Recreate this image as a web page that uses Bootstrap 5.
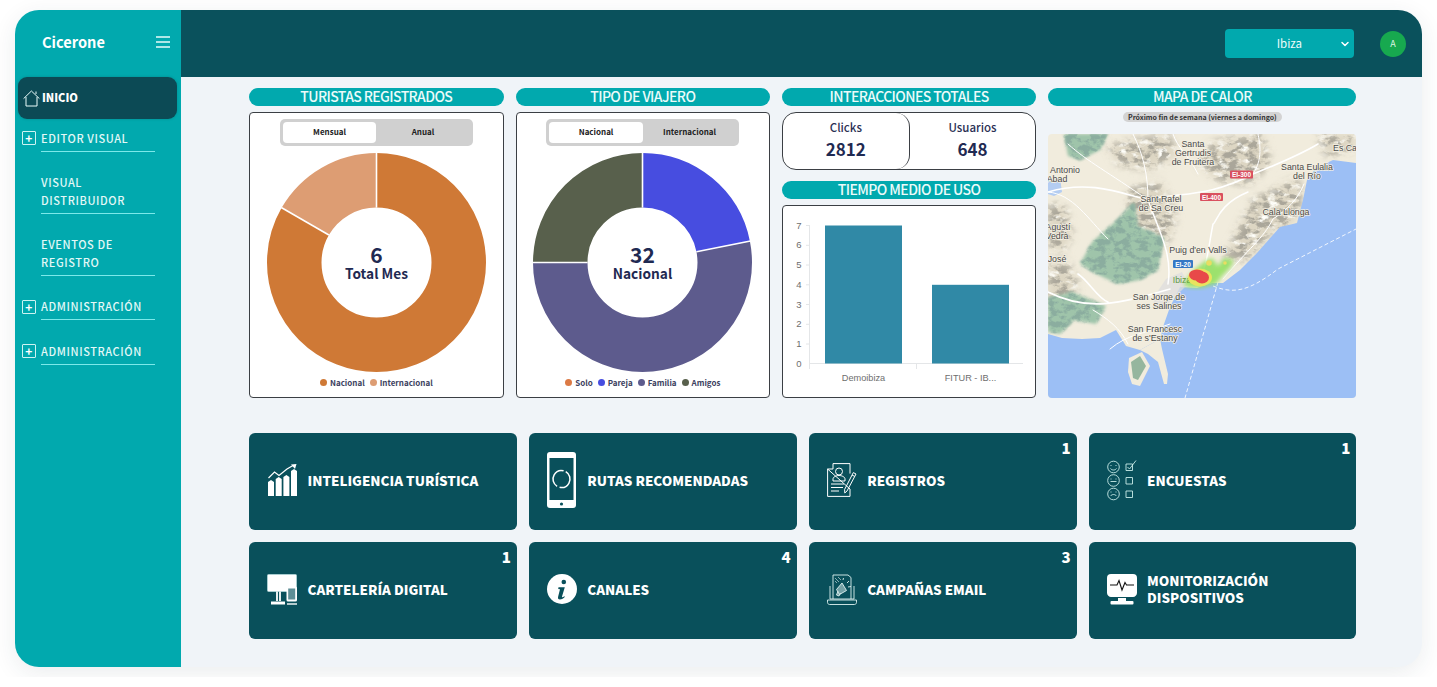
<!DOCTYPE html>
<html lang="es">
<head>
<meta charset="UTF-8">
<title>Cicerone</title>
<link rel="stylesheet" href="https://cdn.jsdelivr.net/npm/bootstrap@5.3.0/dist/css/bootstrap.min.css">
<style>
body { background:#fff; font-family:"Noto Sans CJK SC","Noto Sans",sans-serif; overflow:hidden; }
.app-frame { margin:10px 15px; width:1407px; height:657px; border-radius:24px; overflow:hidden; background:#f0f4f8; box-shadow:0 6px 24px rgba(30,50,70,.09); }
.side-bar { width:166px; background:#01a9ae; color:#fff; }
.side-brand { height:67px; padding:0 11px 4px 27px; font-size:14.6px; font-weight:700; }
.side-active { margin:0 4px 10px 3px; height:42px; background:#0c4a55; border-radius:9px; padding-left:5px; font-size:11px; font-weight:900; gap:2px; box-shadow:0 0 3px rgba(0,0,0,.18); }
.side-active span { margin-top:-2px; }
.side-item { padding-left:7px; margin-bottom:22px; font-size:11px; line-height:17.5px; letter-spacing:.6px; color:#e3f8f7; font-weight:500; }
.side-plus { flex:none; width:14px; height:14px; margin:2px 5px 0 0; border:1px solid #cdf3f2; border-radius:1px; display:flex; align-items:center; justify-content:center; font-size:12px; line-height:1; font-weight:700; color:#fff; }
.side-gap { flex:none; width:19px; }
.side-text { width:114px; border-bottom:1px solid #7ce9ea; padding:.5px 0 3.5px; }
.top-bar { height:67px; background:#0a515c; padding-right:17px; }
.zone-select { width:129px; height:29px; padding:0 20px; border:0; border-radius:4px; background-color:#01a9ae; color:#eefcfb; font-size:11.5px; text-align:center; background-size:10px 8px; background-position:right 4px center; background-image:url("data:image/svg+xml,%3csvg xmlns='http://www.w3.org/2000/svg' viewBox='0 0 16 16'%3e%3cpath fill='none' stroke='%23fff' stroke-linecap='round' stroke-linejoin='round' stroke-width='3' d='m2 5 6 6 6-6'/%3e%3c/svg%3e"); }
.user-dot { width:26px; height:26px; margin-left:26px; border-radius:50%; background:#17a94f; color:#dff5e6; font-size:9px; }
.main-area { padding:11px 66.5px 0 68px; }
.stat-grid { display:grid; grid-template-columns:254.6px 254.4px 254.4px 1fr; gap:12px; height:310px; }
.head-pill { height:18px; margin-bottom:6px; border-radius:9px; background:#01a9ae; color:#ecfbfa; font-size:14px; font-weight:500; letter-spacing:-.6px; line-height:17px; text-align:center; flex:none; }
.box-line { background:#fff; border:1px solid #3b3f44; border-radius:4px; }
.switch-wrap { width:193px; height:27px; margin-top:6px; padding:3px; background:#d0d0d0; border-radius:5px; font-size:8px; font-weight:700; color:#222; flex:none; }
.switch-wrap > div { flex:1; display:flex; align-items:center; justify-content:center; border-radius:4px; padding-bottom:1px; }
.switch-wrap > div.is-on { background:#fff; }
.donut-wrap { margin-top:6.500px; display:block; flex:none; }
.donut-mid { fill:#1f2a52; font-weight:700; text-anchor:middle; font-family:"Noto Sans CJK SC","Noto Sans",sans-serif; }
.legend-row { font-size:8px; font-weight:700; color:#3c4160; gap:5px; margin-top:5px; line-height:12px; }
.legend-row i { display:inline-block; width:7px; height:7px; border-radius:50%; margin-right:3px; }
.count-box { height:58px; border-radius:14px; flex:none; }
.count-cell { flex:1; height:100%; text-align:center; padding-top:6px; color:#2b3054; }
.count-left { border:0 solid #3b3f44; border-right-width:1px; border-radius:14px; }
.count-cell span { display:block; font-size:11.5px; font-weight:500; line-height:16px; }
.count-cell b { display:block; font-size:17px; line-height:24px; margin-top:2px; color:#1f2a52; }
.pill-gap { margin-top:11px; }
.near-tag { width:159px; height:10px; margin:0 auto 12px; background:#d3d3d3; border-radius:5px; font-size:7px; line-height:10px; font-weight:700; text-align:center; color:#333; flex:none; }
.map-box { border-radius:4px; overflow:hidden; height:264px; display:block; }
.map-box text { font-family:"Liberation Sans",Arial,sans-serif; font-size:8.800px; fill:#4a4a48; text-anchor:middle; paint-order:stroke; stroke:#f4f0e4; stroke-width:1.4px; }
.map-box text.shield { font-size:6.500px; fill:#fff; stroke:none; font-weight:700; }
.tile-grid { display:grid; grid-template-columns:repeat(4,1fr); gap:12px; margin-top:35px; }
.tile-card { position:relative; height:97px; background:#09505b; border-radius:6px; color:#fff; padding:0 0 3px 18px; gap:10.500px; font-size:13.4px; line-height:17px; font-weight:900; }
.tile-icon { width:30px; flex:none; display:flex; justify-content:center; }
.tile-num { position:absolute; top:5px; right:6px; font-size:15px; line-height:20px; font-weight:900; }
</style>
</head>
<body>
<div class="app-frame d-flex">

  <aside class="side-bar flex-shrink-0">
    <div class="side-brand d-flex align-items-center justify-content-between">
      <span>Cicerone</span>
      <svg width="14" height="12" viewBox="0 0 14 12" stroke="#e6fbfa" stroke-width="1.3"><path d="M0 1h14M0 6h14M0 11h14"/></svg>
    </div>
    <div class="side-active d-flex align-items-center">
      <svg width="17" height="17" viewBox="0 0 17 17" fill="none" stroke="#e9fbfa" stroke-width="1"><path d="M.6 8.6 8.400 1l8 7.600M3 7v9h11V7M13 4V1.500"/></svg>
      <span>INICIO</span>
    </div>
    <div class="side-item d-flex"><span class="side-plus">+</span><div class="side-text">EDITOR VISUAL</div></div>
    <div class="side-item d-flex"><span class="side-gap"></span><div class="side-text">VISUAL DISTRIBUIDOR</div></div>
    <div class="side-item d-flex"><span class="side-gap"></span><div class="side-text">EVENTOS DE REGISTRO</div></div>
    <div class="side-item d-flex"><span class="side-plus">+</span><div class="side-text">ADMINISTRACIÓN</div></div>
    <div class="side-item d-flex"><span class="side-plus">+</span><div class="side-text">ADMINISTRACIÓN</div></div>
  </aside>

  <div class="flex-grow-1">
    <header class="top-bar d-flex align-items-center justify-content-end">
      <select class="form-select zone-select"><option>Ibiza</option></select>
      <div class="user-dot d-flex align-items-center justify-content-center">A</div>
    </header>

    <main class="main-area">
      <section class="stat-grid">

        <div class="d-flex flex-column">
          <div class="head-pill">TURISTAS REGISTRADOS</div>
          <div class="box-line flex-grow-1 d-flex flex-column align-items-center">
            <div class="switch-wrap d-flex"><div class="is-on">Mensual</div><div>Anual</div></div>
            <svg class="donut-wrap" width="219" height="219" viewBox="-109.500 -109.500 219 219">
              <g fill="none" stroke-width="54.5" transform="rotate(-90)">
                <circle r="82.25" stroke="#cf7936" pathLength="6" stroke-dasharray="5 1"/>
                <circle r="82.25" stroke="#dd9d73" pathLength="6" stroke-dasharray="1 5" stroke-dashoffset="-5"/>
              </g>
              <g stroke="#fff" stroke-width="1.6"><path d="M0-55V-110"/><path d="M0-55V-110" transform="rotate(-60)"/></g>
              <text class="donut-mid" y="0" font-size="21">6</text>
              <text class="donut-mid" y="16.500" font-size="13.700">Total Mes</text>
            </svg>
            <div class="legend-row d-flex"><span><i style="background:#cf7936"></i>Nacional</span><span><i style="background:#dd9d73"></i>Internacional</span></div>
          </div>
        </div>

        <div class="d-flex flex-column">
          <div class="head-pill">TIPO DE VIAJERO</div>
          <div class="box-line flex-grow-1 d-flex flex-column align-items-center">
            <div class="switch-wrap d-flex"><div class="is-on">Nacional</div><div>Internacional</div></div>
            <svg class="donut-wrap" width="219" height="219" viewBox="-109.500 -109.500 219 219">
              <g fill="none" stroke-width="54.5" transform="rotate(-90)">
                <circle r="82.25" stroke="#474de0" pathLength="32" stroke-dasharray="7 25"/>
                <circle r="82.25" stroke="#5d5b8d" pathLength="32" stroke-dasharray="17 15" stroke-dashoffset="-7"/>
                <circle r="82.25" stroke="#58604c" pathLength="32" stroke-dasharray="8 24" stroke-dashoffset="-24"/>
              </g>
              <g stroke="#fff" stroke-width="1.6"><path d="M0-55V-110"/><path d="M0-55V-110" transform="rotate(78.75)"/><path d="M0-55V-110" transform="rotate(-90)"/></g>
              <text class="donut-mid" y="0" font-size="21">32</text>
              <text class="donut-mid" y="16.500" font-size="13.700">Nacional</text>
            </svg>
            <div class="legend-row d-flex"><span><i style="background:#dc7a45"></i>Solo</span><span><i style="background:#474de0"></i>Pareja</span><span><i style="background:#5d5b8d"></i>Familia</span><span><i style="background:#58604c"></i>Amigos</span></div>
          </div>
        </div>

        <div class="d-flex flex-column">
          <div class="head-pill">INTERACCIONES TOTALES</div>
          <div class="box-line count-box d-flex">
            <div class="count-cell count-left"><span>Clicks</span><b>2812</b></div>
            <div class="count-cell"><span>Usuarios</span><b>648</b></div>
          </div>
          <div class="head-pill pill-gap">TIEMPO MEDIO DE USO</div>
          <div class="box-line flex-grow-1">
            <svg width="252" height="191" viewBox="0 0 252 191" font-family="Liberation Sans,Arial,sans-serif" font-size="9.5" fill="#6e6e6e">
              <g stroke="#e4e6e8"><path d="M26.5 19V163M26.5 157.500H240M133.500 157.500V163"/><path d="M23 19.500h4M23 39.300h4M23 59h4M23 78.800h4M23 98.500h4M23 118.300h4M23 138h4"/></g>
              <g text-anchor="middle"><text x="16" y="22.500">7</text><text x="16" y="42">6</text><text x="16" y="62">5</text><text x="16" y="81.500">4</text><text x="16" y="101.500">3</text><text x="16" y="121">2</text><text x="16" y="141">1</text><text x="16" y="160.500">0</text>
              <text x="80.500" y="174.500" font-size="9.200">Demoibiza</text><text x="187.500" y="174.500" font-size="9.200">FITUR - IB...</text></g>
              <rect x="42" y="19.500" width="77" height="138" fill="#3089a6"/>
              <rect x="149" y="78.800" width="77" height="78.700" fill="#3089a6"/>
            </svg>
          </div>
        </div>

        <div class="d-flex flex-column">
          <div class="head-pill">MAPA DE CALOR</div>
          <div class="near-tag">Próximo fin de semana (viernes a domingo)</div>
          <svg class="map-box" width="308" height="264" viewBox="0 0 308 264">
            <defs>
              <filter id="reliefTan" filterUnits="userSpaceOnUse" x="0" y="0" width="308" height="264">
                <feGaussianBlur in="SourceGraphic" stdDeviation="4" result="soft"/>
                <feTurbulence type="fractalNoise" baseFrequency=".1 .16" numOctaves="4" seed="5" result="n"/>
                <feColorMatrix in="n" type="matrix" values="0 0 0 0 .40  0 0 0 0 .38  0 0 0 0 .32  5.500 0 0 0 -2.450" result="dark"/>
                <feColorMatrix in="n" type="matrix" values="0 0 0 0 1  0 0 0 0 1  0 0 0 0 .96  0 4 0 0 -2.100" result="lite"/>
                <feComposite in="dark" in2="soft" operator="in" result="d"/>
                <feComposite in="lite" in2="soft" operator="in" result="l"/>
                <feMerge><feMergeNode in="soft"/><feMergeNode in="l"/><feMergeNode in="d"/></feMerge>
              </filter>
              <filter id="reliefGreen" filterUnits="userSpaceOnUse" x="0" y="0" width="308" height="264">
                <feGaussianBlur in="SourceGraphic" stdDeviation="1.500" result="soft"/>
                <feTurbulence type="fractalNoise" baseFrequency=".12 .17" numOctaves="4" seed="12" result="n"/>
                <feColorMatrix in="n" type="matrix" values="0 0 0 0 .26  0 0 0 0 .42  0 0 0 0 .35  5.500 0 0 0 -2.400" result="dark"/>
                <feComposite in="dark" in2="soft" operator="in" result="d"/>
                <feMerge><feMergeNode in="soft"/><feMergeNode in="d"/></feMerge>
              </filter>
              <filter id="soft1"><feGaussianBlur stdDeviation="2"/></filter>
              <filter id="soft2"><feGaussianBlur stdDeviation=".6"/></filter>
            </defs>
            <rect width="308" height="264" fill="#f1ecdd"/>
            <path filter="url(#reliefTan)" fill="#ddd6c3" d="M150 30 165 8 215 0 222 30 200 50 170 46ZM205 66 250 44 254 66 246 90 225 96 200 126 176 126 190 96ZM80 55 112 48 128 82 118 112 96 100 82 88ZM0 70 16 72 24 100 14 118 0 112ZM60 12 120 0 130 22 100 35 70 30ZM0 130 20 128 30 152 14 170 0 168ZM270 0H308V14L278 22Z"/>
            <path filter="url(#reliefGreen)" fill="#9fc4aa" d="M70 85 86 68 90 92 116 104 110 136 92 146 70 150 48 140 32 130 44 108ZM16 0H60L52 16 32 26 20 22ZM0 164 24 158 58 172 48 190 26 186 12 200 0 198Z"/>
            <path fill="#9cbff5" d="M308 29 285 26 268 34 259 46 255 66 249 89 232 93 209 119 192 136 175 149 164 149 149 154 132 153 122 173 116 190 112 205 92 216 78 212 68 196 52 204 34 205 14 204 0 200V264H308Z"/>
            <path fill="#f1ecdd" d="M92 216 112 205 114 215 120 240 119 250 116 250 110 228 100 220Z"/>
            <path fill="#f1ecdd" d="M81 224 94 218 102 232 92 252 84 250 80 238Z"/>
            <path fill="#7ea98e" d="M83 228 92 222 98 232 90 246 85 244Z" opacity=".8"/>
            <path fill="#b4cdf2" d="M0 48 12 44 14 58 6 62 0 60Z"/>
            <path fill="#dedede" d="M118 145 134 138 140 150 130 160 120 170 104 174 108 160Z" opacity=".75"/>
            <g fill="none" stroke="#fff" stroke-width="1" stroke-linejoin="round" stroke-linecap="round">
              <path stroke-width="1.600" d="M0 58C40 46 70 58 100 66 130 58 160 64 205 40 225 32 250 22 270 10"/>
              <path stroke-width="1.500" d="M120 150C125 120 110 95 100 66M165 90C160 115 160 130 150 148M200 58C170 70 168 90 165 90"/>
              <path stroke-width="1.600" d="M0 158C40 178 70 170 122 155M30 140C40 146 50 165 60 168"/>
              <path d="M100 66C100 40 95 20 85 0M150 40C140 20 130 15 125 0M205 40C215 25 212 10 210 0M60 105C40 85 25 60 0 58M175 145C200 115 215 105 225 85 240 75 250 65 256 50M20 10C40 28 60 38 100 66M122 190C95 200 80 200 62 215M45 176C60 185 72 194 80 210"/>
            </g>
            <g fill="none" stroke="#fff" stroke-width="1" stroke-dasharray="4 2.500" opacity=".85">
              <path d="M170 148 157 194 137 264"/>
              <path d="M165 152C185 160 200 158 230 135L308 95"/>
            </g>
            <text x="145" y="13">Santa</text><text x="145" y="22">Gertrudis</text><text x="145" y="30.500">de Fruitera</text>
            <text x="297" y="17">Es Ca</text>
            <text x="259" y="36">Santa Eulalia</text><text x="259" y="45">del Río</text>
            <text x="17" y="39">Antonio</text><text x="9" y="48">Abad</text>
            <text x="113" y="68">Sant Rafel</text><text x="113" y="77">de Sa Creu</text>
            <text x="238" y="81">Cala Llonga</text>
            <text x="10" y="96">Agustí</text><text x="9" y="105">Vedrà</text>
            <text x="9" y="128">José</text>
            <text x="150" y="119">Puig d'en Valls</text>
            <text x="111" y="166">San Jorge de</text><text x="111" y="175">ses Salines</text>
            <text x="107" y="198">San Francesc</text><text x="107" y="207">de s'Estany</text>
            <g fill="#d9505f"><rect x="182" y="36.500" width="23" height="8" rx="1"/><rect x="152" y="59" width="23" height="8" rx="1"/></g>
            <rect x="125" y="126" width="20" height="8" rx="1" fill="#3578c5"/>
            <text class="shield" x="193.500" y="43">EI-300</text><text class="shield" x="163.500" y="65.500">EI-400</text><text class="shield" x="135" y="132.500">EI-20</text>
            <path filter="url(#soft1)" fill="#8ee05a" opacity=".85" d="M136 148 146 136 156 128 164 124 170 132 176 124 186 126 182 134 174 142 168 150 152 154 138 153Z"/>
            <text x="134" y="149" style="fill:#5f9a3e;stroke:none">Ibiza</text>
            <g filter="url(#soft2)">
              <ellipse cx="152" cy="143.500" rx="12" ry="9" fill="#e9e35e"/>
              <circle cx="161" cy="129" r="2.800" fill="#e9dd62"/>
              <circle cx="177" cy="129" r="1.800" fill="#e9dd62"/>
              <ellipse cx="149" cy="141" rx="8" ry="5.500" fill="#e84a4a"/>
              <ellipse cx="154" cy="143.500" rx="7" ry="6" fill="#e84a4a"/>
            </g>
          </svg>
        </div>
      </section>

      <section class="tile-grid">
        <div class="tile-card d-flex align-items-center">
          <span class="tile-icon"><svg width="29" height="32" viewBox="0 0 29 32" fill="#fff"><path d="M0 18 3 16 6 18V32H0zM7.700 15 10.700 13 13.700 15V32H7.700zM15.400 13 18.400 11 21.400 13V32H15.400zM23 7 26 5 29 7V32H23z"/><path d="M.5 14 6.500 8 11 11.500 19 5 25 1.500" fill="none" stroke="#fff" stroke-width="1.200"/><path d="m23 .6 5.500-.6-1.500 5z"/></svg></span>
          <span>INTELIGENCIA TURÍSTICA</span>
        </div>
        <div class="tile-card d-flex align-items-center">
          <span class="tile-icon"><svg width="29" height="56" viewBox="0 0 29 56"><rect width="29" height="56" rx="3" fill="#fff"/><rect x="2.500" y="6" width="24" height="42" fill="#09505b"/><circle cx="14.500" cy="52" r="1.600" fill="#09505b"/><circle cx="14.500" cy="27" r="8.500" fill="none" stroke="#fff" stroke-width="1.500" stroke-dasharray="24 2.700" transform="rotate(-60 14.500 27)"/></svg></span>
          <span>RUTAS RECOMENDADAS</span>
        </div>
        <div class="tile-card d-flex align-items-center">
          <span class="tile-icon"><svg width="30" height="34" viewBox="0 0 30 34" fill="none" stroke="#fff" stroke-width="1"><path d="M6 .6h17v10M23 26v7.400H.6V6zM6 .6V6H.6"/><circle cx="12" cy="8.500" r="3.500"/><path d="M6 18v-2c0-2 3-3.500 6-3.500s6 1.500 6 3.500v2zM4 21h13M4 24.500h12M4 28h8"/><path d="M20 28 29 11l-2.700-1.400L17.600 26.500l.2 3.500zM25 12l2.700 1.400"/></svg></span>
          <span>REGISTROS</span>
          <span class="tile-num">1</span>
        </div>
        <div class="tile-card d-flex align-items-center">
          <span class="tile-icon"><svg width="30" height="41" viewBox="0 0 30 41" fill="none" stroke="#c9ebe8" stroke-width=".9"><circle cx="6.500" cy="7" r="5.800"/><circle cx="6.500" cy="20.500" r="5.800"/><circle cx="6.500" cy="34" r="5.800"/><path d="M3.500 8.500c1.500 2 4.500 2 6 0M3.500 21.500h6M3.500 36c1.500-2 4.500-2 6 0M4 5v1M9 5v1M4 18.500v1M9 18.500v1M4 31.500v1M9 31.500v1"/><path d="M19 4h6.500v6.500H19zM19 17.500h6.500V24H19zM19 31h6.500v6.500H19z"/><path d="m20.500 7 2 2L29 .500"/></svg></span>
          <span>ENCUESTAS</span>
          <span class="tile-num">1</span>
        </div>
        <div class="tile-card d-flex align-items-center">
          <span class="tile-icon"><svg width="30" height="31" viewBox="0 0 30 31"><rect x=".5" y=".5" width="29" height="17" rx="1" fill="#fff" stroke="#a9cdd0"/><path d="M10 17.500V27M13 17.500V27" stroke="#fff" stroke-width="1.800"/><path d="M9 27.500h-5v3h14v-3z" fill="#fff"/><rect x="19.500" y="12.500" width="10.500" height="15" rx="1.500" fill="#fff"/><rect x="21.200" y="14.500" width="7" height="11" fill="#5e8e96"/><path d="M20 30h10" stroke="#fff" stroke-width="1.400"/></svg></span>
          <span>CARTELERÍA DIGITAL</span>
          <span class="tile-num">1</span>
        </div>
        <div class="tile-card d-flex align-items-center">
          <span class="tile-icon"><svg width="30" height="30" viewBox="0 0 30 30"><circle cx="15" cy="15" r="15" fill="#fff"/><circle cx="16.800" cy="8" r="2.300" fill="#09505b"/><path d="M11.500 13.300h6.300L15 22.500c-.2.800.5 1 1.200.6l1.500-1-.3 1.500c-1.500 1.300-3 1.900-4.400 1.900-1.700 0-2.400-1-1.900-2.700l1.900-7.500-1.800-.4z" fill="#09505b"/></svg></span>
          <span>CANALES</span>
          <span class="tile-num">4</span>
        </div>
        <div class="tile-card d-flex align-items-center">
          <span class="tile-icon"><svg width="30" height="31" viewBox="0 0 30 31" fill="none" stroke="#dff2f1" stroke-width=".9"><path d="M6 25V1h15l3 2.500V25"/><path d="M3 12v13h24V12M.5 26h29v2.500c0 1-1 2-2 2h-25c-1 0-2-1-2-2z"/><path d="M11 17l-1.500 4 2.500 1 1.500-3M9.500 15.500l3 5 7-4-4.500-7.500z" fill="#dff2f1" fill-opacity=".5"/><path d="M20 9l2-2M21 13l3-.5M16 6l.5-2"/><path d="M8 4l4 4M8 7l2 2M11 3l3 3" stroke-width=".6"/></svg></span>
          <span>CAMPAÑAS EMAIL</span>
          <span class="tile-num">3</span>
        </div>
        <div class="tile-card d-flex align-items-center">
          <span class="tile-icon"><svg width="30" height="31" viewBox="0 0 30 31"><path d="M4 0h22a4 4 0 0 1 4 4v15c0 2-2 4-4 4H4c-2 0-4-2-4-4V4a4 4 0 0 1 4-4z" fill="#fff"/><path d="M3 11h7l2-4.500 3 9.500 3-7.500 1.500 2.500H27" fill="none" stroke="#111" stroke-width="1.100"/><path d="M11 24h8v3h-8z" fill="#fff"/><rect x="3.500" y="27" width="23" height="3.500" rx="1" fill="#fff"/></svg></span>
          <span>MONITORIZACIÓN<br>DISPOSITIVOS</span>
        </div>
      </section>
    </main>
  </div>
</div>
<script src="https://cdn.jsdelivr.net/npm/bootstrap@5.3.0/dist/js/bootstrap.bundle.min.js"></script>
</body>
</html>
